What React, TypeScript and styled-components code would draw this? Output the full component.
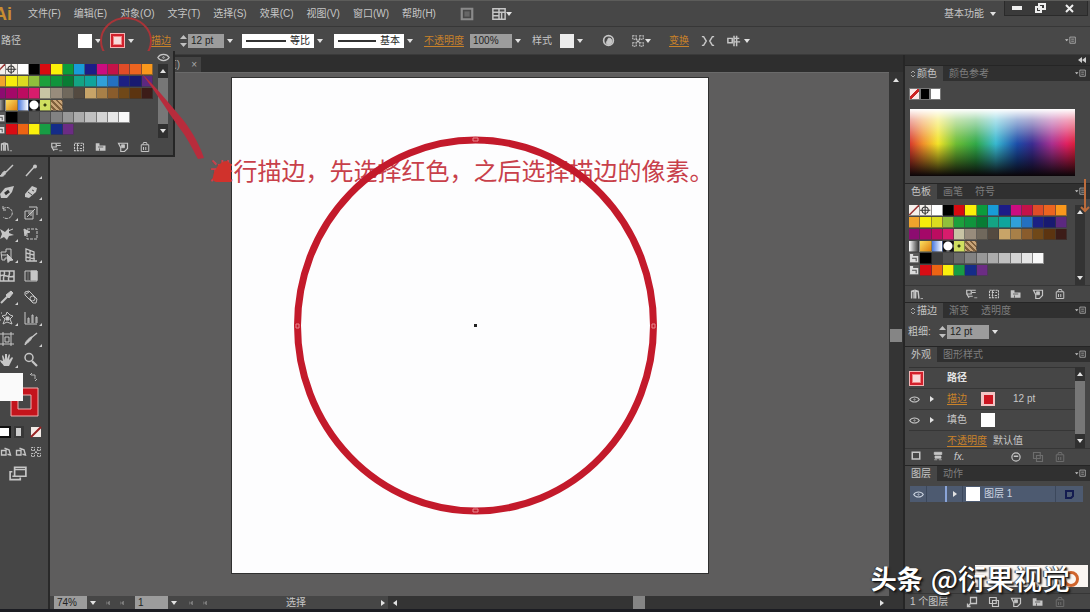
import React from "react";
import styled, { createGlobalStyle, css } from "styled-components";

const GlobalStyle = createGlobalStyle`
  * { box-sizing: border-box; }
  body { margin: 0; background: #1b1c22; }
  button, input, select { font: inherit; color: inherit; margin: 0; padding: 0; border: 0; background: none; border-radius: 0; }
  button { cursor: pointer; }
`;

const App_ = styled.div`
  position: relative;
  display: flex;
  flex-direction: column;
  min-height: 100vh;
  overflow: hidden;
  background: #464646;
  border-bottom: 3px solid #1b1c22;
  color: #c6c6c6;
  font: 10px/14px "Liberation Sans", "Noto Sans CJK SC", sans-serif;
  white-space: nowrap;
`;

/* ---------- top bars ---------- */
const MenuBar = styled.header`
  display: flex;
  align-items: center;
  height: 27px;
  background: #474747;
  border-top: 1px solid #5c5c5a;
  border-bottom: 1px solid #373737;
`;
const Logo = styled.div`
  display: flex;
  justify-content: flex-end;
  width: 12px;
  overflow: hidden;
  color: #c98d32;
  font-size: 18px;
  font-weight: 700;
  line-height: 20px;
`;
const Menus = styled.nav`
  display: flex;
  gap: 13px;
  margin: 0 24px 0 16px;
`;
const MenuButton = styled.button`
  min-width: 32px;
  text-align: left;
  white-space: nowrap;
`;
const ToolbarButton = styled.button`
  display: flex;
  align-items: center;
  margin-right: 18px;
`;
const Workspace = styled.button`
  display: flex;
  align-items: center;
  gap: 6px;
  margin: 0 8px 0 auto;
`;
const WindowButtons = styled.div`
  display: flex;
  align-self: flex-start;
  width: 84px;
  height: 15px;
  margin-right: 2px;
  border: 1px solid #2a2a2a;
  border-top: 0;
  background: #3a3a3a;
  color: #eee;
`;
const WindowButton = styled.button<{ $wide?: boolean }>`
  flex: ${(p) => (p.$wide ? 3 : 2)};
  display: flex;
  align-items: center;
  justify-content: center;
`;
const ControlBar = styled.div`
  display: flex;
  align-items: center;
  height: 28px;
  background: #484848;
  border-bottom: 1px solid #3a3a3a;
`;
const Context = styled.div`
  width: 78px;
  padding-left: 1px;
`;
const Group = styled.div<{ $before?: number }>`
  display: flex;
  align-items: center;
  margin-left: ${(p) => p.$before ?? 8}px;
`;
const OrangeLink = styled.button`
  color: #c8822a;
  text-decoration: underline;
  text-underline-offset: 2px;
`;
const Field = styled.input<{ $w: number }>`
  width: ${(p) => p.$w}px;
  height: 14px;
  padding-left: 3px;
  background: #9c9c9c;
  color: #222;
`;
const Arrow = styled.button`
  display: flex;
  align-items: center;
  justify-content: center;
  width: 12px;
  height: 14px;
  flex: none;
`;
const BrushBox = styled.div<{ $w: number }>`
  display: flex;
  align-items: center;
  width: ${(p) => p.$w}px;
  height: 14px;
  padding-left: 4px;
  background: #fff;
  color: #222;
  svg { flex: none; }
  select { appearance: none; width: 24px; height: 14px; margin-left: 4px; line-height: 14px; }
`;
const Chip = styled.button<{ $c: string }>`
  width: 14px;
  height: 14px;
  flex: none;
  background: ${(p) => p.$c};
`;
const StrokeChip = styled.button`
  display: flex;
  align-items: center;
  justify-content: center;
  width: 15px;
  height: 15px;
  flex: none;
  background: #d2202c;
  border: 1px solid #f4b4b4;
  &::after { content: ""; width: 7px; height: 7px; background: #f8dada; border: 1px solid #f08484; }
`;
const EndButton = styled.button`
  margin: 0 14px 0 auto;
  display: flex;
`;

/* ---------- body ---------- */
const Body = styled.div`
  flex: 1;
  display: flex;
`;
const Toolbox = styled.aside`
  width: 50px;
  flex: none;
  padding-top: 105px;
  background: #464646;
  border-right: 2px solid #292929;
  overflow: hidden;
`;
const Tools = styled.div`
  display: grid;
  grid-template-columns: 24px 24px;
  grid-auto-rows: 21px;
  margin-left: -5px;
  margin-bottom: 2px;
`;
const Tool = styled.button<{ $more?: boolean }>`
  position: relative;
  display: flex;
  align-items: center;
  justify-content: center;
  ${(p) =>
    p.$more &&
    css`
      &::after {
        content: "";
        position: absolute;
        right: 1px;
        bottom: 2px;
        border-left: 3px solid transparent;
        border-bottom: 3px solid #d0d0d0;
      }
    `}
`;
const ToolRow = styled.div<{ $h: number; $pad?: number }>`
  display: flex;
  align-items: center;
  gap: 3px;
  height: ${(p) => p.$h}px;
  padding-left: ${(p) => p.$pad ?? 0}px;
`;
const Proxy = styled.svg`
  display: block;
`;
const Document = styled.main`
  flex: 1;
  min-width: 0;
  display: flex;
  flex-direction: column;
`;
const TabStrip = styled.div`
  display: flex;
  align-items: flex-end;
  height: 17px;
  background: #2e2e2e;
`;
const DocTab = styled.div`
  display: flex;
  align-items: center;
  justify-content: flex-end;
  gap: 11px;
  width: 151px;
  height: 15px;
  padding-right: 4px;
  background: #434343;
  color: #aaa;
`;
const CanvasRow = styled.div`
  flex: 1;
  display: flex;
`;
const Canvas = styled.div`
  flex: 1;
  padding-top: 4px;
  background: #5e5d5d;
  border-top: 1px solid #6a6a6a;
`;
const Artboard = styled.section`
  position: relative;
  width: 478px;
  height: 497px;
  margin: 0 auto;
  background: #fdfdfe;
  border: 1px solid #303030;
  svg { position: relative; display: block; }
`;
const Caption = styled.p`
  position: absolute;
  left: -22px;
  top: 75px;
  margin: 0;
  color: #c8404a;
  font: 400 24px/34px "Noto Sans CJK SC", sans-serif;
`;
const VScroll = styled.div`
  display: flex;
  flex-direction: column;
  align-items: center;
  justify-content: space-between;
  width: 14px;
  padding: 5px 0 8px;
  background: #343434;
`;
const Thumb = styled.div`
  width: 12px;
  height: 13px;
  background: #858585;
`;
const StatusBar = styled.footer`
  display: flex;
  align-items: center;
  height: 13px;
  background: #464646;
  padding-left: 4px;
`;
const StatusText = styled.div`
  flex: none;
  width: 170px;
  padding-left: 76px;
`;
const HScroll = styled.div`
  flex: 1;
  display: flex;
  align-items: center;
  justify-content: space-between;
  height: 13px;
  margin-left: 2px;
  padding: 0 18px 0 4px;
  background: #343434;
`;

/* ---------- dock ---------- */
const Dock = styled.aside`
  display: flex;
  flex-direction: column;
  width: 187px;
  flex: none;
  border-left: 2px solid #262626;
  background: #464646;
`;
const DockTop = styled.div`
  display: flex;
  align-items: center;
  justify-content: flex-end;
  height: 10px;
  padding-right: 4px;
  background: #2f2f2f;
`;
const Tabs = styled.div`
  display: flex;
  height: 16px;
  flex: none;
  background: #303030;
  border-top: 1px solid #252525;
`;
const Tab = styled.button<{ $on?: boolean }>`
  display: flex;
  align-items: center;
  gap: 2px;
  padding: 0 6px;
  background: ${(p) => (p.$on ? "#464646" : "transparent")};
  color: ${(p) => (p.$on ? "#c4c4c4" : "#7e7e7e")};
`;
const PanelMenu = styled.button`
  display: flex;
  align-items: center;
  margin: 0 4px 0 auto;
`;
const Panel = styled.div<{ $h: number }>`
  min-height: ${(p) => p.$h}px;
  display: flex;
  flex-direction: column;
`;
const Mini = styled.div`
  display: flex;
  width: 32px;
  margin: 7px 0 9px 4px;
`;
const MiniChip = styled.button<{ $c: string }>`
  flex: 1;
  height: 12px;
  background: ${(p) => p.$c};
  border: 1px solid #777;
`;
const Spectrum = styled.div`
  height: 67px;
  margin: 0 15px 0 5px;
  background:
    linear-gradient(180deg, #fff 0%, rgba(255, 255, 255, 0.6) 16%, rgba(255, 255, 255, 0.15) 42%, rgba(0, 0, 0, 0) 52%, rgba(0, 0, 0, 0.5) 78%, #0a0508 100%),
    linear-gradient(90deg, #d83a2c 0%, #f0902a 8%, #f2e428 17%, #6cbc34 28%, #30a848 40%, #38b8d0 52%, #1c4ca8 65%, #3a2c90 74%, #a83090 86%, #e02060 95%, #d8203c 100%);
`;
const SwatchArea = styled.div`
  flex: 1;
  display: flex;
  justify-content: space-between;
  padding: 6px 5px 0 4px;
`;
const SwatchRows = styled.div`
  display: flex;
  flex-direction: column;
  gap: 1px;
  width: 158px;
`;
const SwatchRow = styled.div`
  display: grid;
  grid-template-columns: repeat(14, 1fr);
  height: 11px;
`;
const Swatch = styled.button<{ $c: string }>`
  background: ${(p) => p.$c};
  border: solid rgba(60, 60, 60, 0.55);
  border-width: 0 1px 1px 0;
  svg { display: block; width: 100%; height: 100%; }
`;
const ListScroll = styled.div<{ $thumb?: boolean }>`
  display: flex;
  flex-direction: column;
  align-items: center;
  justify-content: space-between;
  width: 10px;
  flex: none;
  padding: 4px 0;
  background: ${(p) => (p.$thumb ? "linear-gradient(#303030 0 14px, #777 14px calc(100% - 14px), #303030 calc(100% - 14px))" : "#333")};
`;
const PanelFooter = styled.div<{ $h?: number }>`
  display: flex;
  align-items: center;
  justify-content: space-between;
  height: ${(p) => p.$h ?? 17}px;
  flex: none;
  padding: 0 24px 0 5px;
  border-top: 1px solid #363636;
`;
const FootSet = styled.div`
  display: flex;
  gap: 10px;
`;
const IconButton = styled.button<{ $dim?: boolean }>`
  display: flex;
  opacity: ${(p) => (p.$dim ? 0.3 : 1)};
`;
const StrokeRow = styled.div`
  display: flex;
  align-items: center;
  height: 27px;
  padding-left: 3px;
  label { width: 28px; }
`;
const Appearance = styled.div`
  display: flex;
  justify-content: space-between;
  flex: 1;
  padding: 5px 5px 0 4px;
`;
const AppearList = styled.div`
  flex: 1;
  height: 80px;
  overflow: hidden;
  border-top: 1px solid #333;
`;
const AppearRow = styled.div`
  display: grid;
  grid-template-columns: 20px 18px 34px 32px 1fr;
  align-items: center;
  height: 21px;
  border-bottom: 1px solid #363636;
`;
const RowName = styled.div`
  grid-column: 3 / -1;
  color: #e4e4e4;
  font-weight: 700;
`;
const Pair = styled.div`
  grid-column: 3 / -1;
  display: flex;
  gap: 6px;
`;
const LayersBody = styled.div`
  flex: 1;
  display: flex;
  flex-direction: column;
  padding-top: 5px;
`;
const LayerRow = styled.div`
  display: flex;
  align-items: center;
  height: 16px;
  margin: 0 7px 0 5px;
  background: #4d5a70;
  color: #ccd4e0;
`;
const LayerCell = styled.div<{ $w: number; $line?: boolean }>`
  display: flex;
  align-items: center;
  justify-content: center;
  width: ${(p) => p.$w}px;
  height: 16px;
  border-right: ${(p) => (p.$line ? "2px solid #8aa4d8" : "1px solid #3c485c")};
`;
const LayerLink = styled.div`
  display: flex;
  align-items: center;
  justify-content: center;
  width: 28px;
  height: 16px;
  border-left: 1px solid #3c485c;
`;
const LayerName = styled.div`
  flex: 1;
  padding-left: 4px;
`;

/* ---------- floating pieces ---------- */
const FloatPanel = styled.section`
  position: absolute;
  left: 0;
  top: 51px;
  width: 175px;
  height: 106px;
  display: flex;
  flex-direction: column;
  overflow: hidden;
  background: #484848;
  border: solid #262626;
  border-width: 0 2px 2px 0;
`;
const FloatHead = styled.div`
  display: flex;
  justify-content: flex-end;
  height: 13px;
  padding-right: 3px;
`;
const FloatArea = styled.div`
  display: flex;
  justify-content: space-between;
  height: 74px;
  padding-right: 5px;
  margin-left: -5px;
`;
const FloatFoot = styled.div`
  display: flex;
  flex: 1;
  align-items: center;
  gap: 10px;
  padding-right: 22px;
`;
const Spacer = styled.span`
  flex: 1;
`;
const Marks = styled.svg`
  position: absolute;
  left: 0;
  top: 0;
  pointer-events: none;
`;
const OrangeMark = styled.svg`
  position: absolute;
  right: 0;
  top: 178px;
  pointer-events: none;
`;
const Watermark = styled.div`
  position: absolute;
  right: 2px;
  bottom: 13px;
  display: flex;
  align-items: center;
  gap: 8px;
  padding-right: 18px;
  color: #fff;
  font: 500 28px/36px "Noto Sans CJK SC", sans-serif;
  text-shadow: 1px 1px 1px #111, 2px 2px 2px #222, -1px 0 1px #333;
  b { position: relative; font-weight: 700; font-size: 26px; }
  span { position: relative; }
`;
const Stamp = styled.i`
  position: absolute;
  right: 0;
  top: 5px;
  width: 113px;
  height: 22px;
  background: #fbf6f2;
  &::after {
    content: "";
    position: absolute;
    right: 9px;
    top: 6px;
    width: 10px;
    height: 10px;
    border: 3px solid #d0642c;
    border-radius: 50%;
  }
`;

/* ---------- icons ---------- */
const art: Record<string, React.ReactNode> = {
  brush: <><path d="M14 2 7 9" strokeWidth="1.4" /><path d="M7 9c-1 4-4 5-6 4 2-1 2-4 5-5z" fill="currentColor" /></>,
  pencil: <><path d="M12 3 3 13" strokeWidth="1.5" /><circle cx="12" cy="3.5" r="2" fill="currentColor" stroke="none" /></>,
  blob: <><path d="M15 2 6 4 1 10l1 4h6l5-6z" fill="currentColor" stroke="none" /><path d="m6 10 4-3" stroke="#333" strokeWidth="3" /></>,
  eraser: <><path d="m2 10 7-8 5 2-1 4-7 6-4-1z" fill="currentColor" stroke="none" /><path d="m5 8 4 3m0-5 2 1" stroke="#464646" /></>,
  rotate: <path d="M4 4a5.500 5.500 0 1 1 0 8M4 1v4h4" strokeDasharray="3 1" />,
  scale: <><path d="M2 6h8v8H2zM6 2h8v8" /><path d="m4 12 8-8M5 8h3v3" /></>,
  width: <><path d="m1 3 5 3 4-4v5l5 2-5 1-2 4-3-3-4 2 2-5z" fill="currentColor" stroke="none" /><path d="m9 5 5-2" /></>,
  free: <><path d="M4 3h10v10H4z" strokeDasharray="3 1" /><path d="m1 3 6 3-3 1-2 3z" fill="currentColor" /></>,
  shape: <><path d="M2 5h5V2h5v9H6v2H3z" /><path d="m8 7 6 6-3 .5-2 2zM2 8h5" fill="currentColor" /></>,
  perspective: <path d="M3 14V2l8 3v9M3 6l8 2M3 10l9 2M7 3v11M3 14h11" strokeWidth="1.300" />,
  mesh: <path d="M1 3h14v10H1zM5 3c2 3-2 6 0 10m5-10c2 3-2 6 0 10M1 8c4-3 9 3 14 0" strokeWidth="1.500" />,
  gradient: <><path d="M2 3h12v10H2z" /><path d="M8 3h6v9H8z" fill="currentColor" /><path d="M5 4v8" opacity=".4" /></>,
  dropper: <><path d="m9 7-7 7" strokeWidth="2" /><path d="m7 6 5-4 2 2-4 5z" fill="currentColor" /></>,
  blend: <><path d="m2 3 4-1 8 8-1 4h-3L2 6z" /><circle cx="9.500" cy="9.500" r="2.500" /><path d="m3 5 3-2" /></>,
  spray: <><path d="m8 2 3 3 3 1-3 3 2 5-5-2-4 2 2-5-3-3 4-1z" /><path d="M7 7h3v3H7z" fill="currentColor" /><path d="M2 3h1M1 10h1" /></>,
  graph: <path d="M2 2v12h12M5 13V8h1v5m3 0V5h1v8m3 0V7h1v6" />,
  board: <path d="M4 1v14M12 1v14M1 3h14M1 13h14M6 6h4v5H6z" />,
  slice: <><path d="M14 2 8 7" strokeWidth="1.400" /><path d="M9 6c-1 4-4 5-7 8 0-3 3-6 6-8z" fill="currentColor" /></>,
  hand: <path d="M5 14c-2-3-4-4-4-6l3 1-1-5 1-1 2 5V2h2v5l2-5 1 1-1 5 3-3 1 1-3 6-1 2z" fill="currentColor" stroke="none" />,
  zoom: <><circle cx="6" cy="5.500" r="4" strokeWidth="1.500" /><path d="m9 9 5 5" strokeWidth="2.200" /></>,
  library: <><path d="M2 13V4l3-1v10m2 0V3l3 1 1 9" strokeWidth="1.800" /><path d="M13 13h3" /></>,
  kinds: <><path d="M1 3h6v5H1zM8 3h5M8 6h5M3 11h6M1 8l3 5" strokeWidth="1.600" /><path d="M11 13h4" /></>,
  options: <path d="M2 3h12v10H2zM5 6h3m2 0h2M5 10h2m2 0h3M6 3v10" strokeDasharray="3 1" strokeWidth="1.400" />,
  folder: <><path d="M1 13V3h5v3h8v7z" fill="currentColor" stroke="none" /><path d="M4 8h7M6 10v3" stroke="#464646" /></>,
  page: <><path d="M2 3h12v7l-4 4H5V9z" strokeWidth="1.600" /><path d="M6 5h4v4H6z" fill="currentColor" /></>,
  trash: <path d="M3 5h10v9H3zM5 5l1-3h4l1 3M6 8v4m3-4v4" strokeWidth="1.300" />,
  layer: <path d="M6 2h8v8H6zM2 14l4-4M2 10v4h4" strokeWidth="1.700" />,
  box: <path d="M3 3h10v9H3z" strokeWidth="2" />,
  newfill: <path d="M3 3h10v3H3zm1 5h8v3H4zM3 13h4m2 0h4" fill="currentColor" />,
  nosign: <><circle cx="8" cy="8" r="5.500" strokeWidth="1.600" /><path d="M5 7h6" strokeWidth="2" /></>,
  dup: <path d="M2 2h9v8H2zM6 6h8v8H6z" strokeWidth="1.500" />,
  eye: <><path d="M1 8c3-5 11-5 14 0-3 5-11 5-14 0z" strokeWidth="1.500" /><circle cx="8" cy="8" r="1" /></>,
  globe: <><circle cx="8" cy="8" r="6" strokeWidth="2" /><path d="M8 5a4 4 0 1 1-3 6z" fill="currentColor" /></>,
  align: <path d="M2 2h4v4H2zm8 0h4v4h-4zM2 10h4v4H2zm8 0h4v4h-4zM6 6l4 4m0-4-4 4" strokeDasharray="2 1" strokeWidth="1.300" />,
  isolate: <path d="M1 3h2l3 5-3 5H1M15 3h-2l-3 5 3 5h2" strokeWidth="1.700" />,
  select: <path d="M1 5h5v5H1zM8 2v12M8 5h6M8 9h7M11 2v12" strokeWidth="1.700" />,
  menu: <><path d="M0 6h5L2.500 9z" fill="currentColor" stroke="none" /><path d="M7 3h8v9H7zM9 6h4M9 9h4" /></>,
  bridge: <><path d="M2 2h12v12H2z" strokeWidth="2.500" stroke="#8a8a8a" /><path d="M5 5h6v6H5z" fill="#666" stroke="none" /></>,
  arrange: <path d="M1 2h14v12H1zM8 2v12M1 6h14M1 10h7M11 6v8" strokeWidth="1.700" />,
  screen: <path d="M5 2h10v8H5zM3 6H1v7h9v-2M5 4h10M3 10h5" strokeWidth="1.500" />,
  mode: <path d="M2 6h6v6H2zM6 3l6 2 2 7-4-1" strokeWidth="1.800" />,
  nav: <path d="M9 4 5 8l4 4zM3 5v6" fill="currentColor" opacity=".5" />,
};
const Icon = ({ name, size = 12 }: { name: string; size?: number }) => (
  <svg width={size} height={size} viewBox="0 0 16 16" fill="none" stroke="currentColor" aria-hidden="true">{art[name]}</svg>
);
const Tri = ({ d = "down" }: { d?: "down" | "up" | "left" | "right" }) => (
  <svg width="6" height="6" viewBox="0 0 6 6" fill="#e2e2e2" aria-hidden="true">
    <path d={{ down: "M0 1h6L3 5z", up: "M0 5h6L3 1z", left: "M5 0v6L1 3z", right: "M1 0v6l4-3z" }[d]} />
  </svg>
);
const Stepper = () => (
  <svg width="9" height="14" viewBox="0 0 9 14" fill="#c0c0c0" aria-hidden="true"><path d="M1 5h7L4.500 1zM1 9h7l-3.500 4z" /></svg>
);
const Line = ({ w }: { w: number }) => (
  <svg width={w} height="4" aria-hidden="true"><path d={`M0 2h${w}`} stroke="#333" strokeWidth="2" /></svg>
);

const rows: string[][] = [
  ["none", "reg", "#fff", "#000", "#d80a10", "#fbf008", "#0c9c3c", "#189cd8", "#1c1c88", "#cc0c80", "#c41248", "#e04c28", "#ec6420", "#fa981c"],
  ["#f0a42c", "#f6ec0c", "#dcdc20", "#90c03c", "#1ca03c", "#10943c", "#087c34", "#14a484", "#10a49c", "#30a0d8", "#2470c0", "#1c2084", "#181a70", "#5c2880"],
  ["#8c0c70", "#a40868", "#bc0c60", "#d81c6c", "#c8c4a4", "#988c7c", "#70685c", "#544a40", "#c8a468", "#a88048", "#8a5c2c", "#704818", "#5c3410", "#3c1c18"],
  ["linear-gradient(90deg,#fff,#333)", "linear-gradient(135deg,#fae060,#e08010)", "linear-gradient(90deg,#4878e0,#fff)", "radial-gradient(circle,#fff 0 4px,#111 5px)", "radial-gradient(circle,#384010 0 1px,#d0e060 2px)", "repeating-linear-gradient(45deg,#c8a478 0 2px,#80603c 2px 4px)"],
  ["folder", "#000", "#3c3c3c", "#525252", "#6a6a6a", "#828282", "#989898", "#acacac", "#c0c0c0", "#d4d4d4", "#e6e6e6", "#f8f8f8"],
  ["folder", "#d80c14", "#ec6414", "#faf00c", "#189c44", "#142c88", "#6c2c84"],
];
const Swatches = () => (
  <SwatchRows>
    {rows.map((r, i) => (
      <SwatchRow key={i}>
        {r.map((c, j) => {
          const special = c === "none" || c === "reg" || c === "folder";
          return (
            <Swatch key={j} $c={c === "folder" ? "#5a5a5a" : special ? "#f4f0ec" : c} aria-label={`色板 ${i + 1}-${j + 1}`}>
              {c === "none" && <svg viewBox="0 0 10 10"><path d="M0 10 10 0" stroke="#933" strokeWidth="1.500" /></svg>}
              {c === "reg" && <svg viewBox="0 0 10 10" fill="none" stroke="#333"><path d="M5 0v10M0 5h10" /><circle cx="5" cy="5" r="3" /></svg>}
              {c === "folder" && <svg viewBox="0 0 10 10"><path d="M1 9V1h3v2h5v6z" fill="#ddd" /><path d="M3 5h4v3" stroke="#555" fill="none" /></svg>}
            </Swatch>
          );
        })}
      </SwatchRow>
    ))}
  </SwatchRows>
);
const FootIcons = () => (
  <>
    {["kinds", "options", "folder", "page", "trash"].map((n) => (
      <IconButton key={n} aria-label={n}><Icon name={n} size={12} /></IconButton>
    ))}
  </>
);
const TabRow = ({ names, grip }: { names: string[]; grip?: boolean }) => (
  <Tabs>
    {names.map((n, i) => (
      <Tab key={n} $on={i === 0}>
        {grip && i === 0 && <svg width="4" height="8" viewBox="0 0 4 8" fill="none" stroke="#aaa"><path d="M0 3l2-2 2 2M0 5l2 2 2-2" /></svg>}
        {n}
      </Tab>
    ))}
    <PanelMenu aria-label="面板菜单"><Icon name="menu" size={11} /></PanelMenu>
  </Tabs>
);

const menus = ["文件(F)", "编辑(E)", "对象(O)", "文字(T)", "选择(S)", "效果(C)", "视图(V)", "窗口(W)", "帮助(H)"];
const tools: [string, boolean][] = [
  ["brush", false], ["pencil", true], ["blob", false], ["eraser", true], ["rotate", true], ["scale", true], ["width", true],
  ["free", false], ["shape", true], ["perspective", true], ["mesh", false], ["gradient", false], ["dropper", true], ["blend", false],
  ["spray", true], ["graph", true], ["board", false], ["slice", true], ["hand", true], ["zoom", false],
];

export default function App() {
  return (
    <App_>
      <GlobalStyle />
      <MenuBar>
        <Logo>Ai</Logo>
        <Menus>{menus.map((m) => <MenuButton key={m}>{m}</MenuButton>)}</Menus>
        <ToolbarButton aria-label="Bridge"><Icon name="bridge" size={14} /></ToolbarButton>
        <ToolbarButton aria-label="排列文档"><Icon name="arrange" size={14} /><Tri /></ToolbarButton>
        <Workspace>基本功能 <Tri /></Workspace>
        <WindowButtons>
          <WindowButton aria-label="最小化"><svg width="10" height="4"><path d="M0 0h10v4H0z" fill="#eee" /></svg></WindowButton>
          <WindowButton aria-label="还原"><svg width="11" height="10" viewBox="0 0 11 10" fill="none" stroke="#eee" strokeWidth="2"><path d="M4 1h6v5H4zM1 4h5v5H1z" /></svg></WindowButton>
          <WindowButton $wide aria-label="关闭"><svg width="9" height="9" viewBox="0 0 9 9"><path d="m1 1 7 7M8 1 1 8" stroke="#eee" strokeWidth="2" /></svg></WindowButton>
        </WindowButtons>
      </MenuBar>

      <ControlBar>
        <Context>路径</Context>
        <Group $before={0}><Chip $c="#fff" aria-label="填色" /><Arrow aria-label="填色选项"><Tri /></Arrow></Group>
        <Group $before={6}><StrokeChip aria-label="描边颜色" /><Arrow aria-label="描边选项"><Tri /></Arrow></Group>
        <Group $before={14}><OrangeLink>描边</OrangeLink></Group>
        <Group><Stepper /><Field $w={36} defaultValue="12 pt" aria-label="描边粗细" /><Arrow aria-label="粗细预设"><Tri /></Arrow></Group>
        <Group $before={6}>
          <BrushBox $w={72}><Line w={40} /><select aria-label="宽度配置文件"><option>等比</option></select></BrushBox>
          <Arrow aria-label="宽度列表"><Tri /></Arrow>
        </Group>
        <Group>
          <BrushBox $w={70}><Line w={38} /><select aria-label="画笔定义"><option>基本</option></select></BrushBox>
          <Arrow aria-label="画笔列表"><Tri /></Arrow>
        </Group>
        <Group><OrangeLink>不透明度</OrangeLink></Group>
        <Group $before={6}><Field $w={42} defaultValue="100%" aria-label="不透明度" /><Arrow aria-label="不透明度预设"><Tri /></Arrow></Group>
        <Group>样式</Group>
        <Group><Chip $c="#ececec" aria-label="图形样式" /><Arrow aria-label="样式列表"><Tri /></Arrow></Group>
        <Group $before={16}><IconButton aria-label="重新着色"><Icon name="globe" size={13} /></IconButton></Group>
        <Group $before={16}><IconButton aria-label="对齐"><Icon name="align" size={14} /></IconButton><Tri /></Group>
        <Group $before={18}><OrangeLink>变换</OrangeLink></Group>
        <Group $before={12}><IconButton aria-label="隔离"><Icon name="isolate" size={14} /></IconButton></Group>
        <Group $before={12}><IconButton aria-label="选择类似"><Icon name="select" size={14} /></IconButton><Arrow aria-label="选择选项"><Tri /></Arrow></Group>
        <EndButton aria-label="控制栏菜单"><Icon name="menu" size={11} /></EndButton>
      </ControlBar>

      <Body>
        <Toolbox>
          <Tools>{tools.map(([n, more]) => <Tool key={n} $more={more} aria-label={n}><Icon name={n} size={16} /></Tool>)}</Tools>
          <Proxy width="48" height="50" viewBox="0 0 48 50" fill="none" aria-hidden="true">
            <path d="M11 16h27v28H11z" fill="#c4141c" stroke="#f0b0b0" />
            <path d="M18 23h13v14H18z" fill="#464646" stroke="#f0b0b0" />
            <path d="M-1 1h24v28H-1z" fill="#fafafa" />
            <path d="M31 3h4v4M30 3l2-2m3 8 2-2" stroke="#b8b8b8" />
          </Proxy>
          <ToolRow $h={20}>
            <svg width="44" height="14" viewBox="0 0 44 14" aria-hidden="true">
              <path d="M-1 2h11v10H-1z" fill="#fff" stroke="#111" strokeWidth="2" />
              <path d="M14 1h10v12H14z" fill="#383838" /><path d="M16 3h5v8h-5z" fill="#ccc" />
              <path d="M31 2h10v10H31z" fill="#f4ece8" /><path d="m31 12 10-10" stroke="#922" strokeWidth="2" />
            </svg>
          </ToolRow>
          <ToolRow $h={20}>
            <IconButton aria-label="正常绘图"><Icon name="mode" /></IconButton>
            <IconButton aria-label="背面绘图"><Icon name="mode" /></IconButton>
            <IconButton aria-label="内部绘图"><Icon name="align" /></IconButton>
          </ToolRow>
          <ToolRow $h={24} $pad={9}>
            <IconButton aria-label="屏幕模式"><Icon name="screen" size={18} /></IconButton>
          </ToolRow>
        </Toolbox>

        <Document>
          <TabStrip><DocTab><span>览)</span><span>×</span></DocTab></TabStrip>
          <CanvasRow>
            <Canvas>
              <Artboard>
                <Caption>进行描边，先选择红色，之后选择描边的像素。</Caption>
                <svg width="476" height="495" viewBox="0 0 476 495" fill="none">
                  <ellipse cx="243.500" cy="247.500" rx="178" ry="185.500" stroke="#c31a2b" strokeWidth="7" />
                  <g stroke="#e88890"><path d="M241 60h5v3h-5zM241 431h5v3h-5zM64 246h3v4h-3zM420 246h3v4h-3z" /></g>
                  <path d="M242 246h3v3h-3z" fill="#222" />
                </svg>
              </Artboard>
            </Canvas>
            <VScroll><Tri d="up" /><Thumb /><span /></VScroll>
          </CanvasRow>
          <StatusBar>
            <Field $w={33} defaultValue="74%" aria-label="缩放" /><Arrow aria-label="缩放列表"><Tri /></Arrow>
            <Group $before={6}><Icon name="nav" size={8} /></Group><Group $before={6}><Icon name="nav" size={8} /></Group>
            <Group><Field $w={33} defaultValue="1" aria-label="画板" /><Arrow aria-label="画板列表"><Tri /></Arrow></Group>
            <Group><Icon name="nav" size={8} /></Group><Group $before={6}><Icon name="nav" size={8} /></Group>
            <StatusText>选择</StatusText>
            <Tri d="right" />
            <HScroll><Tri d="left" /><Thumb /><Tri d="right" /></HScroll>
          </StatusBar>
        </Document>

        <Dock>
          <DockTop><svg width="8" height="6" viewBox="0 0 8 6" fill="#ccc"><path d="M4 0v6L0 3zm4 0v6L4 3z" /></svg></DockTop>
          <TabRow names={["颜色", "颜色参考"]} grip />
          <Panel $h={102}>
            <Mini><MiniChip $c="linear-gradient(135deg,#fbe8e8 42%,#c22 42% 58%,#fbe8e8 58%)" aria-label="无" /><MiniChip $c="#000" aria-label="黑色" /><MiniChip $c="#fff" aria-label="白色" /></Mini>
            <Spectrum />
          </Panel>
          <TabRow names={["色板", "画笔", "符号"]} />
          <Panel $h={103}>
            <SwatchArea><Swatches /><ListScroll><Tri d="up" /><Tri /></ListScroll></SwatchArea>
            <PanelFooter><IconButton aria-label="色板库"><Icon name="library" size={13} /></IconButton><FootSet><FootIcons /></FootSet></PanelFooter>
          </Panel>
          <TabRow names={["描边", "渐变", "透明度"]} grip />
          <Panel $h={28}>
            <StrokeRow><label htmlFor="weight">粗细:</label><Group $before={2}><Stepper /><Field $w={42} id="weight" defaultValue="12 pt" /><Arrow aria-label="粗细列表"><Tri /></Arrow></Group></StrokeRow>
          </Panel>
          <TabRow names={["外观", "图形样式"]} />
          <Panel $h={103}>
            <Appearance>
              <AppearList>
                <AppearRow><StrokeChip aria-label="路径外观" /><RowName>路径</RowName></AppearRow>
                <AppearRow><Icon name="eye" size={11} /><Tri d="right" /><span><OrangeLink>描边</OrangeLink></span><Chip $c="linear-gradient(#cc1420, #cc1420) center / 9px 9px no-repeat #f4c4c4" aria-label="描边色" /><span>12 pt</span></AppearRow>
                <AppearRow><Icon name="eye" size={11} /><Tri d="right" /><span>填色</span><Chip $c="#fff" aria-label="填充色" /></AppearRow>
                <AppearRow><Pair><OrangeLink>不透明度</OrangeLink>默认值</Pair></AppearRow>
              </AppearList>
              <ListScroll $thumb><Tri d="up" /><Tri /></ListScroll>
            </Appearance>
            <PanelFooter>
              <FootSet><IconButton aria-label="新描边"><Icon name="box" /></IconButton><IconButton aria-label="新填色"><Icon name="newfill" /></IconButton><i>fx.</i></FootSet>
              <FootSet><IconButton aria-label="清除外观"><Icon name="nosign" /></IconButton><IconButton $dim aria-label="复制"><Icon name="dup" /></IconButton><IconButton $dim aria-label="删除"><Icon name="trash" /></IconButton></FootSet>
            </PanelFooter>
          </Panel>
          <TabRow names={["图层", "动作"]} />
          <LayersBody>
            <LayerRow>
              <LayerCell $w={17}><Icon name="eye" size={11} /></LayerCell>
              <LayerCell $w={20} $line />
              <LayerCell $w={16}><Tri d="right" /></LayerCell>
              <Group $before={3}><Chip $c="#fff" aria-label="图层缩览图" /></Group>
              <LayerName>图层 1</LayerName>
              <LayerLink><svg width="9" height="9" viewBox="0 0 9 9" fill="none" stroke="#141c50" strokeWidth="2"><path d="M1 1h7v5L6 8H1z" /></svg></LayerLink>
            </LayerRow>
            <Spacer />
            <PanelFooter $h={16}>
              <span>1 个图层</span>
              <FootSet>{["layer", "dup", "page", "folder"].map((n) => <IconButton key={n} aria-label={n}><Icon name={n} /></IconButton>)}<IconButton $dim aria-label="删除图层"><Icon name="trash" /></IconButton></FootSet>
            </PanelFooter>
          </LayersBody>
        </Dock>
      </Body>

      <Marks width="260" height="200" viewBox="0 0 260 200" fill="none">
        <ellipse cx="126" cy="41" rx="25" ry="23" stroke="#a93438" strokeWidth="2" />
      </Marks>
      <FloatPanel>
        <FloatHead><Icon name="eye" size={13} /></FloatHead>
        <FloatArea><Swatches /><ListScroll $thumb><Tri d="up" /><Tri /></ListScroll></FloatArea>
        <FloatFoot><Icon name="library" size={12} /><Spacer /><FootIcons /></FloatFoot>
      </FloatPanel>
      <Marks width="260" height="200" viewBox="0 0 260 200" fill="none">
        <path d="M142 74c14 13 27 29 42 47 9 12 16 25 20 37l-6 1c-6-11-11-22-20-33-12-17-22-34-36-52z" fill="#b82c3c" />
        <path d="M213 177c1-8 7-16 14-16l4 3v18h-13c-4 0-6-2-5-5z" fill="#d0322c" />
      </Marks>
      <OrangeMark width="10" height="36" viewBox="0 0 10 36" fill="none" stroke="#bc6c3c" strokeWidth="2"><path d="M5 1v32M1 29l4 4 4-4" /></OrangeMark>
      <Watermark><Stamp /><b>头条</b><span>@衍果视觉</span></Watermark>
    </App_>
  );
}
